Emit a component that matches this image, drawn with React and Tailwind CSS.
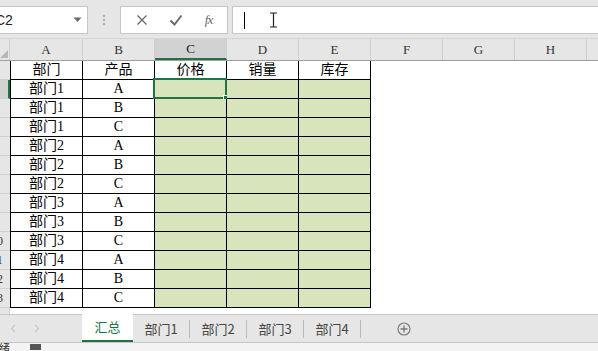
import { useState } from "react"

const rows = [
  ["部门", "产品", "价格", "销量", "库存"],
  ["部门1", "A"], ["部门1", "B"], ["部门1", "C"],
  ["部门2", "A"], ["部门2", "B"], ["部门2", "C"],
  ["部门3", "A"], ["部门3", "B"], ["部门3", "C"],
  ["部门4", "A"], ["部门4", "B"], ["部门4", "C"],
]
const cols = ["A", "B", "C", "D", "E", "F", "G", "H"]
const tabs = ["汇总", "部门1", "部门2", "部门3", "部门4"]

function TopBar() {
  return <div className="h-[39px] bg-[#e6e6e6] flex items-start pt-[6px] border-b border-[#d4d4d4]">
    <div className="w-[88px] h-[28px] bg-white border border-l-0 border-[#c6c6c6] flex items-center justify-between pr-[5px]">
      <span className="ml-[-5px] text-[14px] text-[#222] font-['Liberation_Sans',sans-serif]">C2</span>
      <svg width="9" height="6" viewBox="0 0 9 6"><path d="M0.5 0.5h8L4.5 5z" fill="#6b6b6b" /></svg>
    </div>
    <div className="w-[32px] h-[28px] flex flex-col items-center justify-center gap-[2px]">
      <span className="w-[2px] h-[2px] bg-[#b0b0b0]" />
      <span className="w-[2px] h-[2px] bg-[#b0b0b0]" />
      <span className="w-[2px] h-[2px] bg-[#b0b0b0]" />
    </div>
    <div className="w-[108px] h-[28px] bg-white border border-[#c6c6c6] flex items-center justify-around px-[4px]">
      <svg width="12" height="12" viewBox="0 0 12 12"><path d="M1.5 1.5l9 9M10.5 1.5l-9 9" stroke="#6a6a6a" strokeWidth="1.4" /></svg>
      <svg width="14" height="12" viewBox="0 0 14 12"><path d="M1.5 6.5l4 4 7-9" stroke="#6a6a6a" strokeWidth="2" fill="none" /></svg>
      <span className="italic text-[13px] text-[#6a6a6a] font-['Liberation_Serif',serif] tracking-[-1px]">fx</span>
    </div>
    <div className="ml-[4px] flex-1 h-[28px] bg-white border border-r-0 border-[#c6c6c6] flex items-center">
      <span className="ml-[11px] w-[1px] h-[17px] bg-black" />
      <svg className="ml-[24px]" width="9" height="16" viewBox="0 0 9 16"><path d="M1 1h7M4.5 1v14M1 15h7" stroke="#222" strokeWidth="1.2" fill="none" /></svg>
    </div>
  </div>
}

function HeaderRow() {
  return <div className="h-[22px] flex bg-[#e6e6e6] border-b border-[#9e9e9e] font-['Liberation_Serif',serif] text-[13px] text-[#333]">
    <div className="w-[10px] h-full relative border-r border-[#d0d0d0]">
      <svg className="absolute right-[1px] bottom-[2px]" width="8" height="8" viewBox="0 0 8 8"><path d="M8 0v8H0z" fill="#b8b8b8" /></svg>
    </div>
    {cols.map((c, i) => <div
      key={c}
      className={`${i === 0 ? "w-[73px]" : "w-[72px]"} h-full flex items-center justify-center border-r border-[#cfcfcf] ${c === "C" ? "bg-[#d2d2d2] border-b-2 border-b-[#217346] text-[#1a1a1a]" : ""}`}
    >{c}</div>)}
    <div className="flex-1 h-full" />
  </div>
}

function DataRow({ r, idx }) {
  const num = idx + 1
  const sel = num === 2
  return <div className="h-[19px] flex font-['Liberation_Serif','Noto_Sans_CJK_SC',serif] text-[14px] text-black">
    <div className={`w-[10px] h-full overflow-hidden border-b border-[#d0d0d0] ${sel ? "bg-[#d2d2d2] border-r-2 border-r-[#217346]" : "bg-[#e6e6e6]"}`}>
      <div className="w-[26px] ml-[-16px] text-center text-[12px] leading-[18px] text-[#333]">{num}</div>
    </div>
    {[0, 1, 2, 3, 4].map((c) => {
      const green = idx > 0 && c >= 2
      return <div
        key={c}
        className={`${c === 0 ? "w-[73px] border-l" : "w-[72px]"} h-full border-r border-b border-black flex items-center justify-center leading-none relative ${green ? "bg-[#d8e4bc]" : "bg-white"}`}
      >
        {r[c] || ""}
        {sel && c === 2 && <div className="absolute -left-[2px] -top-[2px] w-[74px] h-[21px] border-2 border-[#217346]">
          <span className="absolute -right-[4px] -bottom-[4px] w-[6px] h-[6px] bg-[#217346] border border-white" />
        </div>}
      </div>
    })}
  </div>
}

function TabBar() {
  return <div className="h-[29px] bg-[#e6e6e6] border-t border-b border-[#c6c6c6] flex items-stretch font-['Noto_Sans_CJK_SC',sans-serif] text-[13px]">
    <div className="w-[82px] flex items-center gap-[18px] pl-[10px] text-[#c4c4c4]">
      <svg width="6" height="9" viewBox="0 0 6 9"><path d="M5 1L1.5 4.5 5 8" stroke="#c8c8c8" strokeWidth="1.2" fill="none" /></svg>
      <svg width="6" height="9" viewBox="0 0 6 9"><path d="M1 1l3.5 3.5L1 8" stroke="#c8c8c8" strokeWidth="1.2" fill="none" /></svg>
    </div>
    {tabs.map((t, i) => i === 0
      ? <div key={t} className="w-[51px] bg-white border-b-2 border-[#217346] flex items-center justify-center text-[#217346] -mt-[1px]">{t}</div>
      : <div key={t} className="w-[57px] flex items-center">
        <div className="flex-1 text-center text-[#444]">{t}</div>
        <span className="w-[1px] h-[18px] bg-[#b9b9b9]" />
      </div>)}
    <div className="flex items-center ml-[36px]">
      <svg width="14" height="14" viewBox="0 0 14 14"><circle cx="7" cy="7" r="6" stroke="#777" strokeWidth="1.1" fill="none" /><path d="M7 3.5v7M3.5 7h7" stroke="#777" strokeWidth="1.3" /></svg>
    </div>
  </div>
}

export default function App() {
  const [active] = useState(0)
  return <div className="w-[598px] h-[351px] overflow-hidden bg-white flex flex-col" data-active={active}>
    <TopBar />
    <HeaderRow />
    {rows.map((r, i) => <DataRow key={i} r={r} idx={i} />)}
    <div className="h-[6px] flex">
      <div className="w-[10px] h-full bg-[#e6e6e6] border-r border-[#d0d0d0]" />
    </div>
    <TabBar />
    <div className="flex-1 bg-[#f3f3f3] flex items-center gap-[20px] overflow-hidden text-[11px] leading-none text-[#333] font-['Noto_Sans_CJK_SC',sans-serif]">
      <span className="ml-[-12px]">就绪</span>
      <span className="w-[11px] h-[6px] bg-[#555]" />
    </div>
  </div>
}
